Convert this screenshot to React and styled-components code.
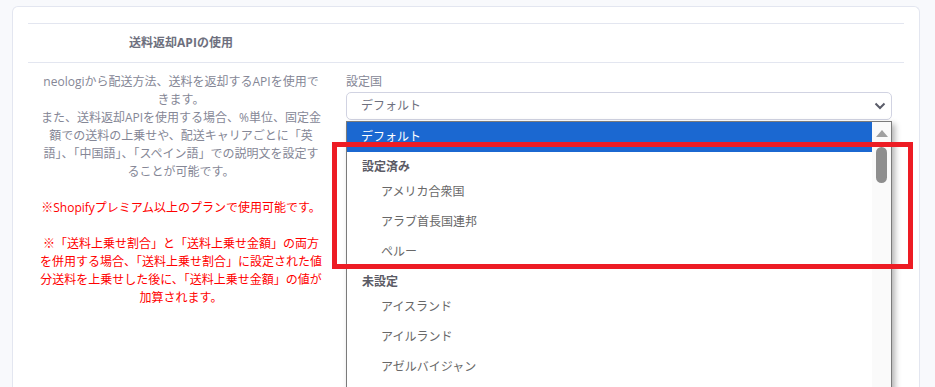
import React from "react";
import styled, {createGlobalStyle} from "styled-components";

const GlobalStyle = createGlobalStyle`
html, body {
margin: 0;
padding: 0;
height: 387px;
overflow: hidden;
background: #f8f9fc;
}
body {
font-family: "Open Sans", "Noto Sans CJK JP", sans-serif;
font-size: 12px;
}
`

const Page = styled.div`
position: relative;
height: 387px;
box-sizing: border-box;
padding: 6px 15px 0 12px;
overflow: hidden;
`

const Card = styled.div`
background: #fff;
border: 1px solid #e3e6f0;
border-bottom: none;
border-radius: 6px 6px 0 0;
padding: 16px 15px 0;
height: 100%;
box-sizing: border-box;
`

const Table = styled.div`
display: grid;
grid-template-columns: 306px 1fr;
`

const Cell = styled.div`
padding: 10px 12px;
border-top: 1px solid #e3e6f0;
line-height: 18px;
color: #858796;
text-align: ${p => p.$center ? 'center' : 'left'};
font-weight: ${p => p.$bold ? 700 : 400};
${p => p.$bold && 'color: #6e707e;'}
`

const Line = styled.div`
white-space: nowrap;
color: ${p => p.$red ? '#ff0000' : 'inherit'};
min-height: 18px;
`

const Label = styled.div`
margin-bottom: 1px;
`

const SelectWrap = styled.div`
position: relative;
`

const Select = styled.div`
height: 28px;
box-sizing: border-box;
border: 1px solid #d1d3e2;
border-radius: 5px;
padding: 0 5px 0 14px;
display: flex;
align-items: center;
justify-content: space-between;
color: #6e707e;
`

const Dropdown = styled.div`
position: absolute;
top: calc(100% + 1px);
left: 0;
right: 0;
height: 280px;
background: #fff;
border: 1px solid #7b7b7b;
border-bottom: none;
box-shadow: 3px 3px 6px rgba(0, 0, 0, 0.3);
display: flex;
`

const List = styled.div`
flex: 1;
overflow: hidden;
`

const Option = styled.div`
height: 30px;
line-height: 30px;
padding-left: ${p => p.$indent ? 34 : 14}px;
color: ${p => p.$active ? '#fff' : '#686868'};
background: ${p => p.$active ? '#1b68d1' : 'transparent'};
white-space: nowrap;
`

const Group = styled.div`
height: 25px;
box-sizing: border-box;
padding: 6px 0 0 15px;
line-height: 18px;
font-weight: 700;
color: #5b5b65;
`

const Track = styled.div`
width: 19px;
background: #fafafa;
display: flex;
flex-direction: column;
align-items: center;
`

const Thumb = styled.div`
width: 11px;
height: 36px;
margin-top: 10px;
border-radius: 6px;
background: #8e8e8e;
`

const Marker = styled.div`
position: absolute;
left: 332px;
top: 142px;
width: 581px;
height: 127px;
box-sizing: border-box;
border: 5px solid #ed1c24;
pointer-events: none;
`

const grayLines = [
    'neologiから配送方法、送料を返却するAPIを使用で',
    'きます。',
    'また、送料返却APIを使用する場合、%単位、固定金',
    '額での送料の上乗せや、配送キャリアごとに「英',
    '語」、「中国語」、「スペイン語」での説明文を設定す',
    'ることが可能です。',
]

const redLines = [
    '※「送料上乗せ割合」と「送料上乗せ金額」の両方',
    'を併用する場合、「送料上乗せ割合」に設定された値',
    '分送料を上乗せした後に、「送料上乗せ金額」の値が',
    '加算されます。',
]

export default function App() {
    return (
        <Page>
            <GlobalStyle/>
            <Card>
                <Table>
                    <Cell $center $bold>送料返却APIの使用</Cell>
                    <Cell/>
                    <Cell $center>
                        {grayLines.map(l => <Line key={l}>{l}</Line>)}
                        <Line/>
                        <Line $red>※Shopifyプレミアム以上のプランで使用可能です。</Line>
                        <Line/>
                        {redLines.map(l => <Line $red key={l}>{l}</Line>)}
                    </Cell>
                    <Cell>
                        <Label>設定国</Label>
                        <SelectWrap>
                            <Select>
                                <span>デフォルト</span>
                                <svg width="12" height="8" viewBox="0 0 12 8">
                                    <polyline points="1.5,1.5 6,6 10.5,1.5" fill="none" stroke="#5a5c69" strokeWidth="2"/>
                                </svg>
                            </Select>
                            <Dropdown>
                                <List>
                                    <Option $active>デフォルト</Option>
                                    <Group>設定済み</Group>
                                    <Option $indent>アメリカ合衆国</Option>
                                    <Option $indent>アラブ首長国連邦</Option>
                                    <Option $indent>ペルー</Option>
                                    <Group>未設定</Group>
                                    <Option $indent>アイスランド</Option>
                                    <Option $indent>アイルランド</Option>
                                    <Option $indent>アゼルバイジャン</Option>
                                </List>
                                <Track>
                                    <svg width="12" height="7" viewBox="0 0 12 7" style={{marginTop: 8}}>
                                        <polygon points="6,0 12,7 0,7" fill="#a0a0a0"/>
                                    </svg>
                                    <Thumb/>
                                </Track>
                            </Dropdown>
                        </SelectWrap>
                    </Cell>
                </Table>
            </Card>
            <Marker/>
        </Page>
    )
}
